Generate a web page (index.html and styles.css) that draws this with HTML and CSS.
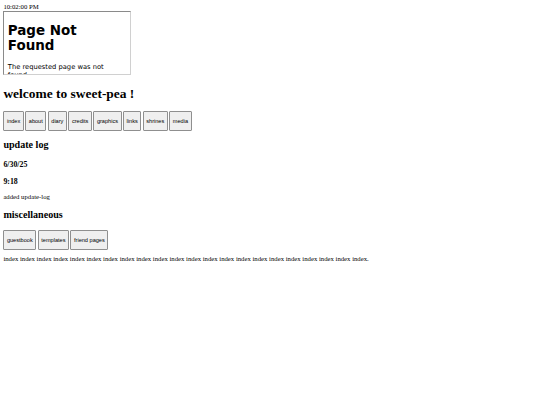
FILE: index.html
```html
<!DOCTYPE html>
<html>
<head>
<meta charset="utf-8">
<title>sweet-pea</title>
<link rel="stylesheet" href="styles.css">
</head>
<body>
<div class="clock">10:02:00 PM</div>
<div class="frame">
  <div class="frame-body">
    <h1 class="frame-title">Page Not Found</h1>
    <p class="frame-text">The requested page was not found.</p>
  </div>
</div>
<h1 class="title">welcome to sweet-pea !</h1>
<nav class="btnrow nav-main">
  <button class="btn">index</button>
  <button class="btn">about</button>
  <button class="btn">diary</button>
  <button class="btn">credits</button>
  <button class="btn">graphics</button>
  <button class="btn">links</button>
  <button class="btn">shrines</button>
  <button class="btn">media</button>
</nav>
<h2 class="section">update log</h2>
<h3 class="entry">6/30/25</h3>
<h3 class="entry">9:18</h3>
<p class="note">added update-log</p>
<h2 class="section">miscellaneous</h2>
<div class="btnrow nav-misc">
  <button class="btn">guestbook</button>
  <button class="btn">templates</button>
  <button class="btn">friend pages</button>
</div>
<p class="filler">index index index index index index index index index index index index index index index index index index index index index index.</p>
</body>
</html>
```
FILE: styles.css
```css
html, body {
  background: #ffffff;
}
body {
  margin: 3.4px;
  font-family: "Liberation Serif", "Times New Roman", serif;
  color: #000;
}
.clock {
  font-size: 6.72px;
  line-height: 7.7px;
}
.frame {
  box-sizing: border-box;
  width: 128px;
  height: 64px;
  overflow: hidden;
  border: 1px solid;
  border-color: #8a8a8a #d0d0d0 #d0d0d0 #8a8a8a;
  margin-bottom: 1px;
}
.frame-body {
  padding: 10.5px 3.4px 0 3.4px;
  font-family: "DejaVu Sans", Verdana, sans-serif;
}
.frame-title {
  margin: 0 0 10px 0;
  font-size: 13.44px;
  line-height: 15.6px;
  font-weight: bold;
}
.frame-text {
  margin: 0;
  font-size: 6.72px;
  line-height: 7.8px;
}
.title {
  margin: 12px 0 0 0;
  font-size: 13.44px;
  line-height: 14.9px;
  font-weight: bold;
}
.btnrow {
  display: flex;
  gap: 1.5px;
}
.nav-main {
  margin-top: 9px;
}
.nav-misc {
  margin-top: 9.4px;
}
.btn {
  box-sizing: border-box;
  height: 20px;
  padding: 0 2.5px;
  margin: 0;
  font-family: "Liberation Sans", Arial, sans-serif;
  font-size: 5.6px;
  color: #000;
  background: #efefef;
  border: 1px solid #8f8f8f;
  border-radius: 1px;
}
.section {
  margin: 8.4px 0;
  font-size: 10.08px;
  line-height: 11.6px;
  font-weight: bold;
}
.entry {
  margin: 8.6px 0 7px 0;
  font-size: 7.86px;
  line-height: 9px;
  font-weight: bold;
}
.note {
  margin: 6.72px 0;
  font-size: 6.72px;
  line-height: 7.7px;
}
.filler {
  margin: 4.7px 0 0 0;
  font-size: 6.72px;
  line-height: 7.7px;
}
```
